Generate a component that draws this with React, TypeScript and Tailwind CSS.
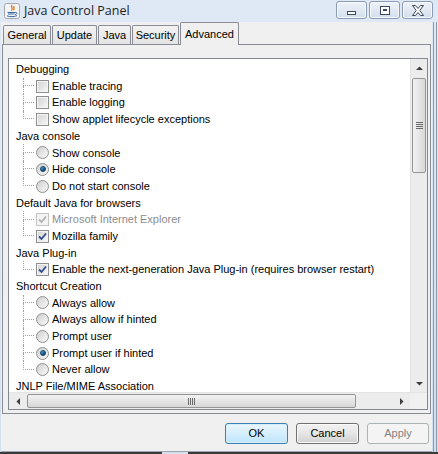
import React from 'react';

type Item = { label: string; kind: 'check' | 'radio'; on?: boolean; disabled?: boolean };
type Section = { title: string; items: Item[] };

const SECTIONS: Section[] = [
  {
    title: 'Debugging',
    items: [
      { label: 'Enable tracing', kind: 'check' },
      { label: 'Enable logging', kind: 'check' },
      { label: 'Show applet lifecycle exceptions', kind: 'check' },
    ],
  },
  {
    title: 'Java console',
    items: [
      { label: 'Show console', kind: 'radio' },
      { label: 'Hide console', kind: 'radio', on: true },
      { label: 'Do not start console', kind: 'radio' },
    ],
  },
  {
    title: 'Default Java for browsers',
    items: [
      { label: 'Microsoft Internet Explorer', kind: 'check', on: true, disabled: true },
      { label: 'Mozilla family', kind: 'check', on: true },
    ],
  },
  {
    title: 'Java Plug-in',
    items: [{ label: 'Enable the next-generation Java Plug-in (requires browser restart)', kind: 'check', on: true }],
  },
  {
    title: 'Shortcut Creation',
    items: [
      { label: 'Always allow', kind: 'radio' },
      { label: 'Always allow if hinted', kind: 'radio' },
      { label: 'Prompt user', kind: 'radio' },
      { label: 'Prompt user if hinted', kind: 'radio', on: true },
      { label: 'Never allow', kind: 'radio' },
    ],
  },
  { title: 'JNLP File/MIME Association', items: [] },
];

const TABS = [
  { name: 'General', w: 'w-[48px]' },
  { name: 'Update', w: 'w-[45px]' },
  { name: 'Java', w: 'w-[33px]' },
  { name: 'Security', w: 'w-[47px]' },
];

function CheckBox({ on, disabled }: { on?: boolean; disabled?: boolean }) {
  return (
    <span
      className={`relative block w-[13px] h-[13px] shrink-0 border ${
        disabled ? 'border-[#c4c4c4] bg-[#f4f4f4]' : 'border-[#8e8f8f] bg-gradient-to-br from-[#d2d2d2] to-[#f8f8f8]'
      } shadow-[inset_0_0_0_1px_#f4f4f4]`}
    >
      {on && (
        <svg className="absolute left-[1px] top-[1px]" width="9" height="9" viewBox="0 0 9 9">
          <path d="M1 4.5 L3.5 7 L8 1.5" fill="none" stroke={disabled ? '#b2b2b2' : '#2c4d91'} strokeWidth="1.8" />
        </svg>
      )}
    </span>
  );
}

function Radio({ on }: { on?: boolean }) {
  return (
    <span className="flex items-center justify-center w-[13px] h-[13px] shrink-0 rounded-full border border-[#8e8f8f] bg-gradient-to-br from-[#cfcfcf] to-[#fafafa]">
      {on && (
        <span className="block w-[6px] h-[6px] rounded-full bg-gradient-to-br from-[#7cc5ee] via-[#1c6aa6] to-[#0d3f6e] border border-[#123c60]" />
      )}
    </span>
  );
}

function TreeRow({ item, last }: { item: Item; last: boolean }) {
  return (
    <div className="flex items-center h-[16.7px] pl-[7px]">
      <span className="flex flex-col w-[11px] h-full shrink-0">
        <span className="block h-1/2 border-l border-b border-dotted border-[#a0a0a0]" />
        <span className={`block h-1/2 ${last ? '' : 'border-l border-dotted border-[#a0a0a0]'}`} />
      </span>
      <span className="flex ml-[2px]">
        {item.kind === 'check' ? <CheckBox on={item.on} disabled={item.disabled} /> : <Radio on={item.on} />}
      </span>
      <span className={`ml-[3px] whitespace-nowrap ${item.disabled ? 'text-[#8d8d8d]' : 'text-black'}`}>{item.label}</span>
    </div>
  );
}

function Arrow({ dir }: { dir: 'up' | 'down' | 'left' | 'right' }) {
  const d = {
    up: 'M0 4 L3.5 0.5 L7 4 Z',
    down: 'M0 0 L3.5 3.5 L7 0 Z',
    left: 'M4 0 L0.5 3.5 L4 7 Z',
    right: 'M0 0 L3.5 3.5 L0 7 Z',
  }[dir];
  const vert = dir === 'up' || dir === 'down';
  return (
    <svg width={vert ? 7 : 4} height={vert ? 4 : 7} viewBox={vert ? '0 0 7 4' : '0 0 4 7'}>
      <path d={d} fill="#3c3c3c" />
    </svg>
  );
}

function WinButton({ kind }: { kind: 'min' | 'max' | 'close' }) {
  return (
    <div className="flex items-center justify-center w-[31px] h-[18px] rounded-[3px] border border-[#8b9bb3] bg-gradient-to-b from-[#eef3fa] to-[#d3deec] shadow-[inset_0_0_0_1px_#f6f9fd]">
      {kind === 'min' && <span className="block mt-[5px] w-[9px] h-[4px] border border-[#3c4a5e] bg-white" />}
      {kind === 'max' && (
        <span className="flex items-center justify-center w-[10px] h-[9px] border border-[#3c4a5e] bg-white">
          <span className="block w-[4px] h-[2px] border border-[#3c4a5e]" />
        </span>
      )}
      {kind === 'close' && (
        <svg width="14" height="11" viewBox="0 0 14 11">
          <path
            d="M1.5 0.5 H4.5 L7 3.5 L9.5 0.5 H12.5 L8.8 5.5 L12.5 10.5 H9.5 L7 7.5 L4.5 10.5 H1.5 L5.2 5.5 Z"
            fill="#fff"
            stroke="#3c4a5e"
            strokeWidth="1"
          />
        </svg>
      )}
    </div>
  );
}

function JavaIcon() {
  return (
    <svg width="16" height="16" viewBox="0 0 16 16">
      <rect x="0.5" y="0.5" width="15" height="15" rx="2" fill="#f4f4f4" stroke="#a4a8ae" />
      <path d="M8 2 C6 4 10 5 7.5 8 M10 3 C9 5 11 5.5 9.5 7" fill="none" stroke="#e2731c" strokeWidth="1.3" />
      <path d="M3.5 9.5 H11 M4 11 H10.5 M3 12.8 C6 14 10 14 13 12.6 M11 9.5 C13.5 9 13.5 11.5 11 11.5" fill="none" stroke="#3569a8" strokeWidth="1" />
    </svg>
  );
}

export default function App() {
  return (
    <div className="w-[438px] h-[454px] overflow-hidden bg-gradient-to-b from-[#dfe9f5] to-[#d2dfee] font-['Liberation_Sans',Arial,sans-serif] text-[11px] text-black select-none">
      {/* Title bar */}
      <div className="flex items-center h-[22px] pl-[4px] pr-[5px]">
        <JavaIcon />
        <span className="ml-[4px] font-['Open_Sans',sans-serif] text-[12.5px] text-[#1e1e1e]">Java Control Panel</span>
        <div className="ml-auto flex gap-[2px] mt-[-2px]">
          <WinButton kind="min" />
          <WinButton kind="max" />
          <WinButton kind="close" />
        </div>
      </div>

      <div className="flex h-[430px]">
        {/* Client area */}
        <div className="flex flex-col w-[431px] ml-[1px] bg-[#f0f0f0] border-b border-[#9aa5b3]">
          {/* Tabs */}
          <div className="flex items-end h-[22px] pl-[2px] gap-[1px]">
            {TABS.map(t => (
              <div
                key={t.name}
                className={`${t.w} h-[19px] flex items-center justify-center border border-b-0 border-[#898c95] bg-gradient-to-b from-[#f3f3f3] to-[#e3e3e3] rounded-t-[2px]`}
              >
                {t.name}
              </div>
            ))}
            <div className="relative z-10 w-[59px] h-[23px] mb-[-1px] flex justify-center pt-[3px] border border-b-0 border-[#898c95] bg-[#f0f0f0] rounded-t-[2px] mr-auto">
              Advanced
            </div>
          </div>

          {/* Tab panel */}
          <div className="h-[370px] ml-[1px] mr-[1px] border border-[#898c95] pt-[13px] pl-[5px] pr-[2px] pb-[3px]">
            <div className="flex flex-col h-full border border-[#828790] bg-white">
              <div className="flex flex-1 min-h-0">
                {/* Viewport */}
                <div className="flex-1 min-w-0 overflow-hidden pt-[2px] pl-[7px]">
                  {SECTIONS.map(s => (
                    <div key={s.title}>
                      <div className="h-[16.7px] flex items-center whitespace-nowrap">{s.title}</div>
                      {s.items.map((it, i) => (
                        <TreeRow key={it.label} item={it} last={i === s.items.length - 1} />
                      ))}
                    </div>
                  ))}
                </div>
                {/* Vertical scrollbar */}
                <div className="flex flex-col w-[17px] bg-[#ececec] border-l border-[#e4e4e4]">
                  <div className="h-[17px] flex items-center justify-center">
                    <Arrow dir="up" />
                  </div>
                  <div className="mt-[2px] h-[95px] mx-[1px] rounded-[2px] border border-[#959595] bg-gradient-to-r from-[#f2f2f2] to-[#d8d8d8] flex flex-col items-center justify-center gap-[1px]">
                    <span className="block w-[7px] h-px bg-[#6a6a6a]" />
                    <span className="block w-[7px] h-px bg-[#6a6a6a]" />
                    <span className="block w-[7px] h-px bg-[#6a6a6a]" />
                    <span className="block w-[7px] h-px bg-[#6a6a6a]" />
                  </div>
                  <div className="flex-1" />
                  <div className="h-[17px] flex items-center justify-center">
                    <Arrow dir="down" />
                  </div>
                </div>
              </div>
              {/* Horizontal scrollbar */}
              <div className="flex h-[17px] bg-[#ececec] border-t border-[#e4e4e4]">
                <div className="w-[17px] flex items-center justify-center">
                  <Arrow dir="left" />
                </div>
                <div className="ml-[1px] my-[1px] w-[329px] rounded-[2px] border border-[#959595] bg-gradient-to-b from-[#f2f2f2] to-[#d8d8d8] flex items-center justify-center gap-[1px]">
                  <span className="block w-px h-[7px] bg-[#6a6a6a]" />
                  <span className="block w-px h-[7px] bg-[#6a6a6a]" />
                  <span className="block w-px h-[7px] bg-[#6a6a6a]" />
                  <span className="block w-px h-[7px] bg-[#6a6a6a]" />
                </div>
                <div className="flex-1" />
                <div className="w-[17px] flex items-center justify-center">
                  <Arrow dir="right" />
                </div>
                <div className="w-[17px] bg-[#f0f0f0]" />
              </div>
            </div>
          </div>

          {/* Buttons */}
          <div className="flex justify-end gap-[8px] pr-[3px] mt-[9px]">
            <button className="w-[63px] h-[21px] rounded-[3px] border border-[#3c7fb1] bg-gradient-to-b from-[#eaf6fd] to-[#bee6fd] shadow-[inset_0_0_0_1px_#d6eefb]">
              OK
            </button>
            <button className="w-[63px] h-[21px] rounded-[3px] border border-[#707070] bg-gradient-to-b from-[#f2f2f2] via-[#e6e6e6] to-[#d0d0d0] shadow-[inset_0_0_0_1px_#fafafa]">
              Cancel
            </button>
            <button className="w-[62px] h-[21px] rounded-[3px] border border-[#adb2b5] bg-[#f4f4f4] text-[#838383]">Apply</button>
          </div>
        </div>
        {/* Right frame */}
        <div className="flex-1 border-l border-[#8d99a8] ml-[1px] mr-[1px] border-r border-r-[#8d99a8]" />
      </div>

      {/* Desktop behind */}
      <div className="flex h-[2px] bg-[#3a3a3a]">
        <span className="block ml-[162px] w-[26px] bg-[#d7dfe8]" />
      </div>
    </div>
  );
}
